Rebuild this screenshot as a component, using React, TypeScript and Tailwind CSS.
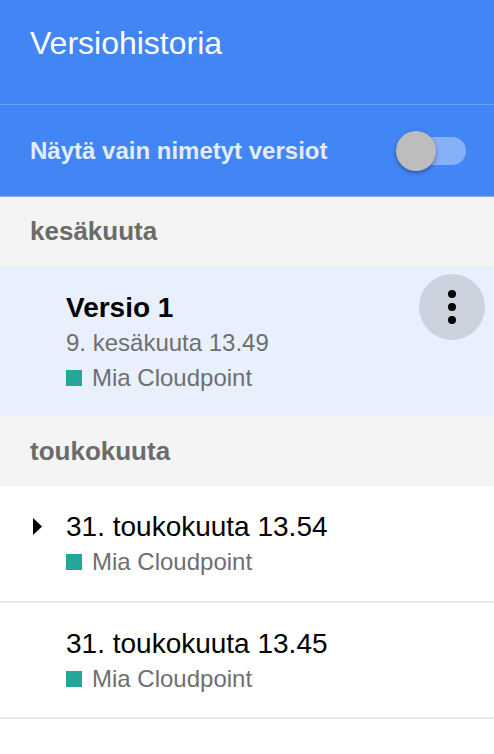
import React from "react";

const font = { fontFamily: '"Liberation Sans", Arial, sans-serif' };

function Author() {
  return (
    <div className="flex items-center h-[35px] gap-[10px]">
      <span className="w-[16px] h-[16px] bg-[#26a69a] inline-block" />
      <span className="text-[24px] text-[#6f6f6f]">Mia Cloudpoint</span>
    </div>
  );
}

export default function App() {
  return (
    <div className="w-[494px] h-[754px] bg-white overflow-hidden" style={font}>
      <div className="bg-[#4285f4] border-b border-[#7aa9f7]">
        <div className="h-[105px] pl-[30px] pt-[23px] border-b border-[#6d9ff6]">
          <div className="text-[32px] leading-[41px] text-white">Versiohistoria</div>
        </div>
        <div className="h-[91px] flex items-center justify-between pl-[30px] pr-[28px]">
          <div className="text-[24px] font-bold text-[#e4edfd]">Näytä vain nimetyt versiot</div>
          <div className="relative w-[70px] h-[40px] flex items-center">
            <div className="absolute left-[1px] right-0 h-[28px] rounded-full bg-[#86b1f8]" />
            <div className="absolute left-0 w-[40px] h-[40px] rounded-full bg-[#bdbdbd] shadow-[0_2px_4px_rgba(0,0,0,0.35)]" />
          </div>
        </div>
      </div>

      <div className="h-[69px] bg-[#f4f4f4] flex items-center pl-[30px]">
        <span className="text-[26px] font-bold text-[#6b6b6b]">kesäkuuta</span>
      </div>

      <div className="h-[151px] bg-[#e8f0fe] flex justify-between">
        <div className="pl-[66px] pt-[24px]">
          <div className="h-[35px] flex items-center text-[28px] font-bold text-black">Versio 1</div>
          <div className="h-[35px] flex items-center text-[24px] text-[#6f6f6f]">9. kesäkuuta 13.49</div>
          <Author />
        </div>
        <div className="mt-[8px] mr-[9px] w-[66px] h-[66px] rounded-full bg-[#ccd3df] flex flex-col items-center justify-center gap-[5px]">
          <span className="w-[8px] h-[8px] rounded-full bg-black" />
          <span className="w-[8px] h-[8px] rounded-full bg-black" />
          <span className="w-[8px] h-[8px] rounded-full bg-black" />
        </div>
      </div>

      <div className="h-[69px] bg-[#f4f4f4] flex items-center pl-[30px]">
        <span className="text-[26px] font-bold text-[#6b6b6b]">toukokuuta</span>
      </div>

      <div className="h-[117px] border-b-2 border-[#e8e8e8] flex">
        <div className="w-[66px] pt-[23px] flex justify-start pl-[33px]">
          <div className="h-[35px] flex items-center">
            <svg width="9" height="17" viewBox="0 0 9 17">
              <polygon points="0,0 9,8.5 0,17" fill="#000" />
            </svg>
          </div>
        </div>
        <div className="pt-[23px]">
          <div className="h-[35px] flex items-center text-[28px] text-black">31. toukokuuta 13.54</div>
          <Author />
        </div>
      </div>

      <div className="h-[116px] border-b-2 border-[#e8e8e8] pl-[66px] pt-[23px]">
        <div className="h-[35px] flex items-center text-[28px] text-black">31. toukokuuta 13.45</div>
        <Author />
      </div>
    </div>
  );
}
